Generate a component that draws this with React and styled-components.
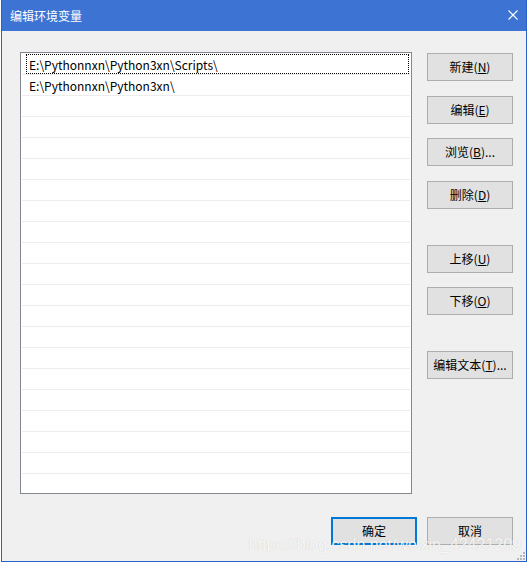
import React from "react";
import styled, { createGlobalStyle } from "styled-components";

const Global = createGlobalStyle`
  html, body { margin: 0; padding: 0; background: #ffffff; }
  body { width: 529px; height: 564px; overflow: hidden; }
  #root { padding-left: 1px; }
`;

const Window = styled.div`
  position: relative;
  box-sizing: border-box;
  width: 526px;
  height: 562px;
  border: 1px solid #2a62cc;
  border-top: none;
  background: #f0f0f0;
  display: flex;
  flex-direction: column;
  font-family: "Noto Sans CJK SC", "Microsoft YaHei", sans-serif;
  font-size: 12px;
  color: #000;
`;

const TitleBar = styled.div`
  height: 31px;
  flex: none;
  background: #3d74d3;
  display: flex;
  align-items: center;
  justify-content: space-between;
  padding: 0 8px 1px 8px;
  box-sizing: border-box;
  color: #fff;
  font-size: 12px;
`;

const CloseIcon = styled.svg`
  width: 10px;
  height: 10px;
`;

const Body = styled.div`
  flex: 1;
  display: flex;
  flex-direction: column;
  padding: 21px 13px 0 18px;
`;

const MainRow = styled.div`
  display: flex;
  gap: 15px;
`;

const ListBox = styled.div`
  box-sizing: border-box;
  width: 392px;
  height: 442px;
  border: 1px solid #828790;
  background: #fff;
  padding: 1px 1px 0 1px;
  overflow: hidden;
  display: flex;
  flex-direction: column;
`;

const Row = styled.div`
  flex: none;
  height: 20px;
  border-bottom: 1px solid #ececec;
  display: flex;
  align-items: stretch;
  padding-left: 4px;
  padding-right: 1px;
`;

const RowInner = styled.div`
  flex: 1;
  box-sizing: border-box;
  display: flex;
  align-items: center;
  padding-left: 2px;
  border: 1px dotted ${(p) => (p.$focus ? "#000" : "transparent")};
  white-space: nowrap;
`;

const ButtonColumn = styled.div`
  display: flex;
  flex-direction: column;
`;

const Button = styled.button`
  box-sizing: border-box;
  width: 86px;
  height: 28px;
  margin-top: ${(p) => p.$gap || 0}px;
  background: #e1e1e1;
  border: ${(p) => (p.$default ? "2px solid #0078d7" : "1px solid #adadad")};
  font-family: "Noto Sans CJK SC", "Microsoft YaHei", sans-serif;
  font-size: 12px;
  color: #000;
  padding: 0 0 2px 0;
  display: flex;
  align-items: center;
  justify-content: center;
  white-space: nowrap;
  cursor: default;
  u { text-underline-offset: 1px; }
`;

const Footer = styled.div`
  display: flex;
  justify-content: flex-end;
  gap: 10px;
  margin-top: 23px;
`;

const Watermark = styled.div`
  position: absolute;
  right: 5px;
  bottom: 7px;
  font-family: "Liberation Sans", Arial, sans-serif;
  font-size: 16px;
  color: rgba(255, 255, 255, 0.85);
  text-shadow: 0 0 1px rgba(150, 150, 150, 0.45);
  pointer-events: none;
  white-space: nowrap;
`;

const Grip = styled.svg`
  position: absolute;
  right: 1px;
  bottom: 1px;
  width: 9px;
  height: 9px;
`;

const items = ["E:\\Pythonnxn\\Python3xn\\Scripts\\", "E:\\Pythonnxn\\Python3xn\\"];

const sideButtons = [
  { label: "新建", key: "N", gap: 1 },
  { label: "编辑", key: "E", gap: 15 },
  { label: "浏览", key: "B", gap: 14, dots: true },
  { label: "删除", key: "D", gap: 15 },
  { label: "上移", key: "U", gap: 36 },
  { label: "下移", key: "O", gap: 14 },
  { label: "编辑文本", key: "T", gap: 36, dots: true },
];

export default function App() {
  const rows = Array.from({ length: 22 }, (_, i) => items[i] || "");
  return (
    <>
      <Global />
      <Window>
        <TitleBar>
          <span>编辑环境变量</span>
          <CloseIcon viewBox="0 0 10 10">
            <path d="M0.5 0.5 L9.5 9.5 M9.5 0.5 L0.5 9.5" stroke="#fff" strokeWidth="1.1" fill="none" />
          </CloseIcon>
        </TitleBar>
        <Body>
          <MainRow>
            <ListBox>
              {rows.map((t, i) => (
                <Row key={i}>
                  <RowInner $focus={i === 0}>{t}</RowInner>
                </Row>
              ))}
            </ListBox>
            <ButtonColumn>
              {sideButtons.map((b) => (
                <Button key={b.key} $gap={b.gap}>
                  {b.label}(<u>{b.key}</u>){b.dots ? "..." : ""}
                </Button>
              ))}
            </ButtonColumn>
          </MainRow>
          <Footer>
            <Button $default>确定</Button>
            <Button>取消</Button>
          </Footer>
        </Body>
        <Watermark>https://blog.csdn.net/weixin_42421209</Watermark>
        <Grip viewBox="0 0 9 9">
          {[
            [7, 1],
            [4, 4],
            [7, 4],
            [1, 7],
            [4, 7],
            [7, 7],
          ].map(([x, y], i) => (
            <rect key={i} x={x} y={y} width="2" height="2" fill="#b8b8b8" />
          ))}
        </Grip>
      </Window>
    </>
  );
}
